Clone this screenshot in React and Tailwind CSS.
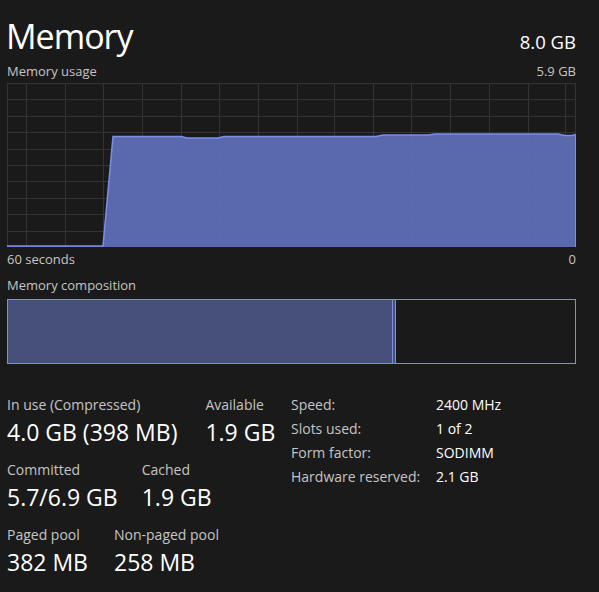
const FONT = "font-['Open_Sans','Noto_Sans',sans-serif]"

const V_LINES = [19, 58, 96, 135, 174, 212, 251, 290, 327, 366, 404, 443, 482, 521, 558]
const H_LINES = [16.4, 32.8, 49.2, 65.6, 82, 98.4, 114.8, 131.2, 147.6]

const AREA = [
  [0, 163], [96, 163], [106, 53.5], [174, 53.5], [180, 55], [211, 55], [217, 53.5],
  [369, 53.5], [376, 52], [421, 52], [428, 51], [551, 51], [558, 52.5], [565, 52.5], [568.5, 51.5],
]

function UsageChart() {
  const line = AREA.map(([x, y]) => `${x},${y}`).join(' ')
  const fill = `M0,164 L${line.split(' ').join(' L')} L568.5,164 Z`
  return (
    <svg width="569" height="164" viewBox="0 0 569 164" className="block">
      <rect x="0.5" y="0.5" width="568" height="163" fill="#1a1a1a" stroke="#333" />
      {V_LINES.map(x => <line key={x} x1={x + 0.5} y1="0" x2={x + 0.5} y2="164" stroke="#333" />)}
      {H_LINES.map(y => <line key={y} x1="0" y1={Math.round(y) + 0.5} x2="569" y2={Math.round(y) + 0.5} stroke="#333" />)}
      <path d={fill} fill="#5f6db8" fillOpacity="0.94" />
      <polyline points={line} fill="none" stroke="#7b8fe8" strokeWidth="1.5" />
      <line x1="568.5" y1="51.5" x2="568.5" y2="164" stroke="#7b8fe8" />
    </svg>
  )
}

function Stat({ label, value }) {
  return (
    <div className="flex flex-col">
      <span className="text-[14px] leading-[19px] text-[#c5c5c5]">{label}</span>
      <span className="text-[23px] leading-[31px] mt-[3px] text-white">{value}</span>
    </div>
  )
}

const SPECS = [
  ['Speed:', '2400 MHz'],
  ['Slots used:', '1 of 2'],
  ['Form factor:', 'SODIMM'],
  ['Hardware reserved:', '2.1 GB'],
]

export default function App() {
  return (
    <div className={`${FONT} w-[599px] h-[592px] bg-[#1a1a1a] pl-[7px] pr-[23px] pt-[12px] text-white overflow-hidden`}>
      <div className="flex items-baseline justify-between h-[48px]">
        <h1 className="text-[34px] leading-[48px] tracking-[-1px] -ml-[1px]">Memory</h1>
        <span className="text-[18.5px]">8.0 GB</span>
      </div>
      <div className="flex justify-between text-[13px] leading-[18px] text-[#c5c5c5] mt-[2px]">
        <span>Memory usage</span>
        <span>5.9 GB</span>
      </div>
      <div className="mt-[3px]">
        <UsageChart />
      </div>
      <div className="flex justify-between text-[13px] leading-[18px] text-[#c5c5c5] mt-[3px]">
        <span>60 seconds</span>
        <span>0</span>
      </div>
      <div className="text-[13px] leading-[18px] text-[#c5c5c5] mt-[8px]">Memory composition</div>
      <div className="mt-[5px] h-[65px] flex border border-[#7b8ee0]">
        <div className="w-[385px] bg-[#46507a] border-r border-[#7b8ee0]" />
        <div className="w-[3px] bg-[#46507a] border-r border-[#7b8ee0]" />
        <div className="flex-1" />
      </div>
      <div className="mt-[31px] flex">
        <div className="w-[284px] flex flex-col gap-[12px]">
          <div className="flex gap-[28px]">
            <Stat label="In use (Compressed)" value="4.0 GB (398 MB)" />
            <Stat label="Available" value="1.9 GB" />
          </div>
          <div className="flex gap-[24px]">
            <Stat label="Committed" value="5.7/6.9 GB" />
            <Stat label="Cached" value="1.9 GB" />
          </div>
          <div className="flex gap-[26px]">
            <Stat label="Paged pool" value="382 MB" />
            <Stat label="Non-paged pool" value="258 MB" />
          </div>
        </div>
        <div className="grid grid-cols-[145px_1fr] auto-rows-[24px] text-[14px] leading-[19px]">
          {SPECS.map(([k, v]) => (
            <div key={k} className="contents">
              <span className="text-[#c5c5c5]">{k}</span>
              <span className="text-white">{v}</span>
            </div>
          ))}
        </div>
      </div>
    </div>
  )
}
